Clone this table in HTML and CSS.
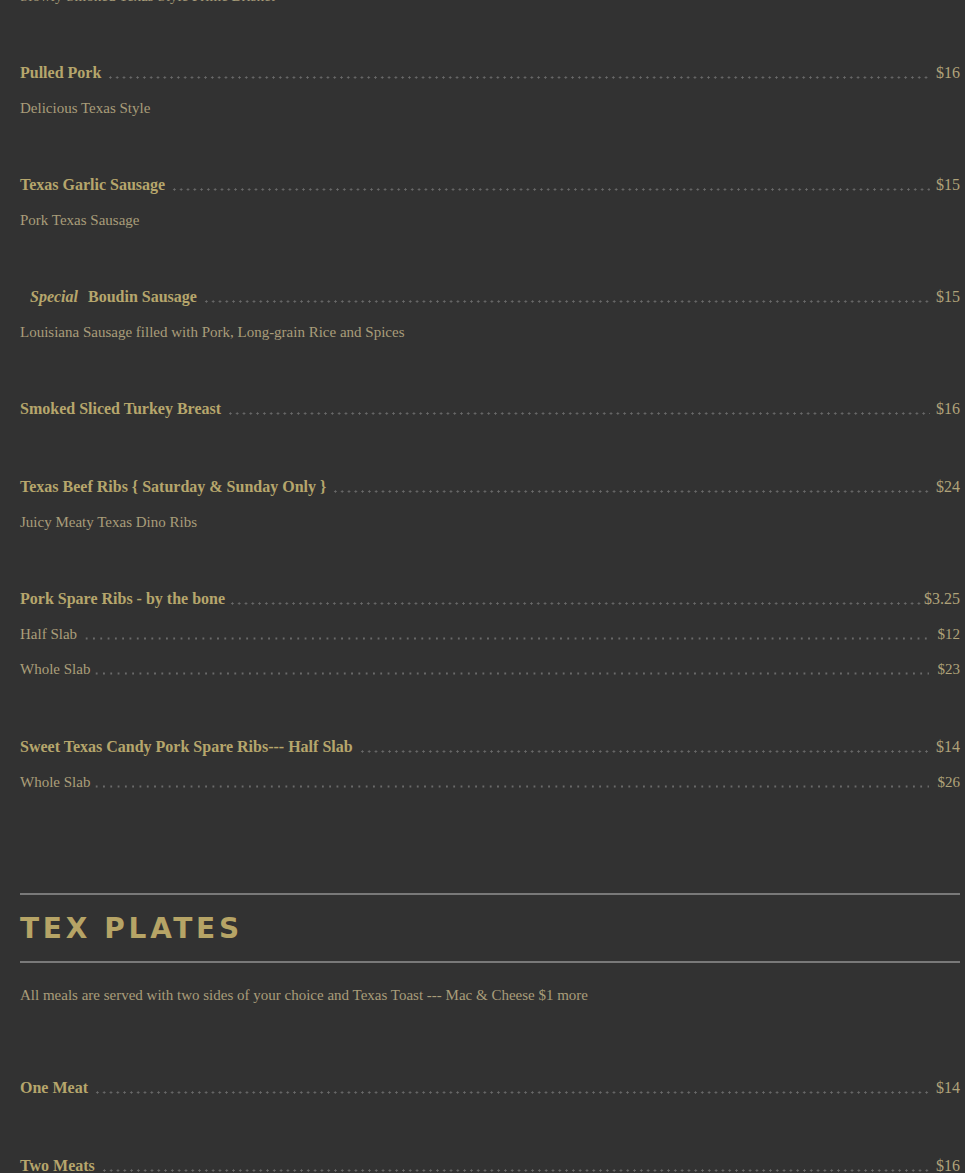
FILE: index.html
```html
<!DOCTYPE html>
<html lang="en">
<head>
<meta charset="utf-8">
<title>Menu</title>
<link rel="stylesheet" href="styles.css">
</head>
<body>
<main class="menu">
  <div class="item item-cut">
    <div class="desc">Slowly Smoked Texas Style Prime Brisket</div>
  </div>

  <div class="item">
    <div class="row"><span class="name">Pulled Pork</span><span class="leader"></span><span class="price">$16</span></div>
    <div class="desc">Delicious Texas Style</div>
  </div>

  <div class="item">
    <div class="row"><span class="name">Texas Garlic Sausage</span><span class="leader"></span><span class="price">$15</span></div>
    <div class="desc">Pork Texas Sausage</div>
  </div>

  <div class="item">
    <div class="row"><span class="name"><em class="special">Special</em>Boudin Sausage</span><span class="leader"></span><span class="price">$15</span></div>
    <div class="desc">Louisiana Sausage filled with Pork, Long-grain Rice and Spices</div>
  </div>

  <div class="item">
    <div class="row"><span class="name">Smoked Sliced Turkey Breast</span><span class="leader"></span><span class="price">$16</span></div>
  </div>

  <div class="item">
    <div class="row"><span class="name">Texas Beef Ribs { Saturday &amp; Sunday Only }</span><span class="leader"></span><span class="price">$24</span></div>
    <div class="desc">Juicy Meaty Texas Dino Ribs</div>
  </div>

  <div class="item">
    <div class="row"><span class="name">Pork Spare Ribs - by the bone</span><span class="leader leader-tight"></span><span class="price">$3.25</span></div>
    <div class="row sub"><span class="sub-name">Half Slab</span><span class="leader"></span><span class="price">$12</span></div>
    <div class="row sub"><span class="sub-name">Whole Slab</span><span class="leader leader-near"></span><span class="price">$23</span></div>
  </div>

  <div class="item">
    <div class="row"><span class="name">Sweet Texas Candy Pork Spare Ribs--- Half Slab</span><span class="leader"></span><span class="price">$14</span></div>
    <div class="row sub"><span class="sub-name">Whole Slab</span><span class="leader leader-near"></span><span class="price">$26</span></div>
  </div>

  <section class="section">
    <h2 class="section-title">Tex Plates</h2>
  </section>
  <p class="note">All meals are served with two sides of your choice and Texas Toast --- Mac &amp; Cheese $1 more</p>

  <div class="item">
    <div class="row"><span class="name">One Meat</span><span class="leader"></span><span class="price">$14</span></div>
  </div>

  <div class="item">
    <div class="row"><span class="name">Two Meats</span><span class="leader"></span><span class="price">$16</span></div>
  </div>
</main>
</body>
</html>
```

FILE: styles.css
```css
html, body {
  margin: 0;
  padding: 0;
  background: #323232;
  overflow: hidden;
}

body {
  font-family: "Liberation Serif", "Times New Roman", serif;
  color: #b5a56c;
}

.menu {
  display: flex;
  flex-direction: column;
  width: 940px;
  margin: -21px 0 0 20px;
}

.item {
  display: flex;
  flex-direction: column;
  margin-bottom: 42px;
}

.row {
  display: flex;
  align-items: center;
  height: 36px;
}

.row.sub {
  height: 35px;
}

.name {
  font-size: 16px;
  font-weight: bold;
  color: #b6a66c;
  white-space: nowrap;
}

.special {
  font-style: italic;
  font-weight: bold;
  margin: 0 10px 0 10px;
}

.sub-name {
  font-size: 15px;
  color: #ab9f7a;
  white-space: nowrap;
}

.leader {
  flex: 1;
  align-self: stretch;
  margin: 0 6px 0 6px;
  background-image: radial-gradient(circle, #6a6a6a 0.9px, rgba(0,0,0,0) 1.3px);
  background-size: 6.8px 3px;
  background-repeat: repeat-x;
  background-position: 0 calc(50% + 4px);
}

.row.sub .leader {
  margin-right: 9px;
  background-position: 0 calc(50% + 4px);
  background-size: 7.3px 3px;
}

.leader-tight {
  margin-right: 3px;
  margin-left: 4px;
}

.row.sub .leader-near {
  margin-left: 3px;
}

.price {
  font-size: 16px;
  color: #b0a37a;
  white-space: nowrap;
}

.row.sub .price {
  font-size: 15px;
}

.desc {
  height: 34px;
  display: flex;
  align-items: center;
  font-size: 15px;
  color: #a99d7a;
}

.section {
  margin-top: 51px;
  border-top: 2px solid #797979;
  border-bottom: 2px solid #797979;
  padding: 17px 0 15px 0;
}

.section-title {
  margin: 0;
  font-family: "DejaVu Sans", "Verdana", sans-serif;
  font-weight: bold;
  font-size: 28px;
  line-height: 34px;
  letter-spacing: 3.7px;
  text-transform: uppercase;
  color: #b6a466;
}

.note {
  margin: 15px 0 58px 0;
  height: 34px;
  display: flex;
  align-items: center;
  font-size: 15px;
  color: #a99d7a;
}
```
